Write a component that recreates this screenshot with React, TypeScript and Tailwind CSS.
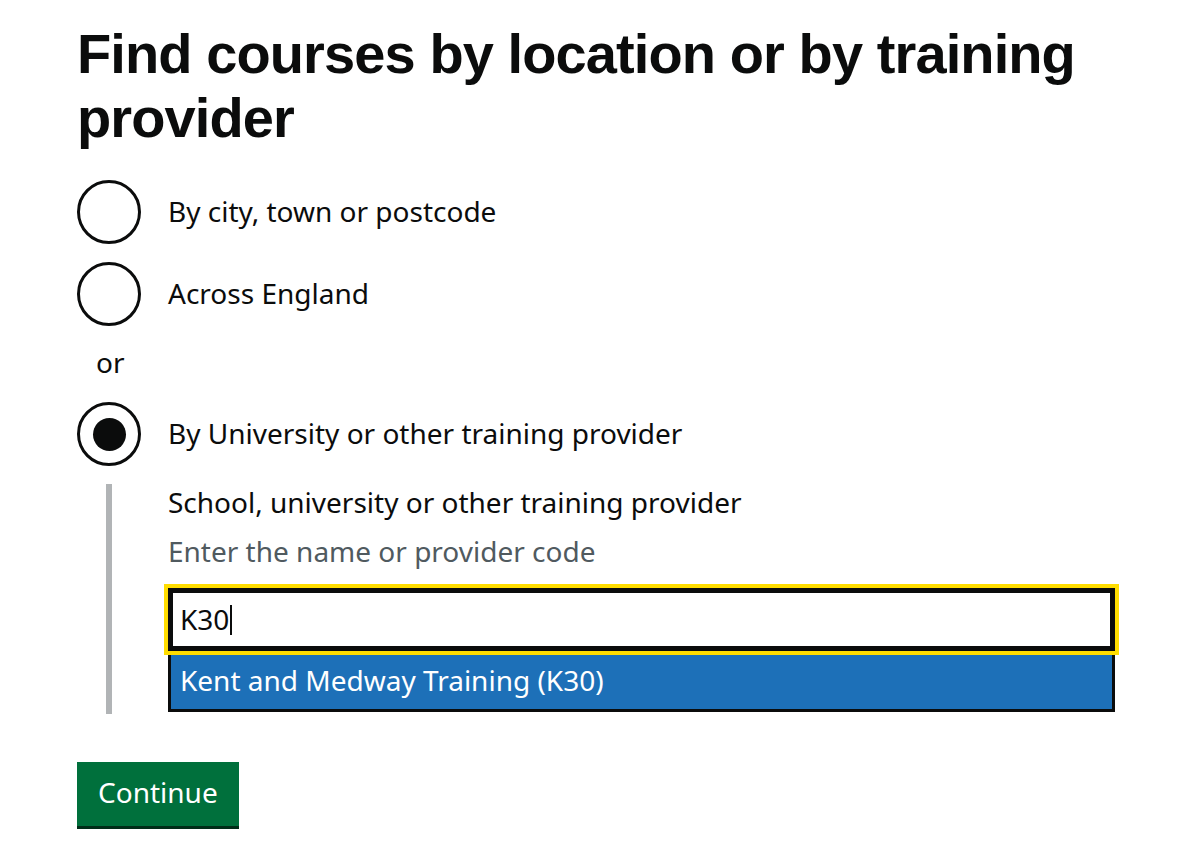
import React from 'react';

const Radio: React.FC<{ label: string; checked?: boolean }> = ({ label, checked }) => (
  <label className="flex items-center gap-[27px]">
    <span className="flex h-[64px] w-[64px] shrink-0 items-center justify-center rounded-full border-[3px] border-[#0b0c0c]">
      {checked && <span className="h-[33px] w-[33px] rounded-full bg-[#0b0c0c]" />}
    </span>
    <span className="pb-[3px] text-[28px] leading-[32px] text-[#0b0c0c]">{label}</span>
  </label>
);

export default function App() {
  return (
    <div className="min-h-screen bg-white pl-[77px] pt-[22px] font-['Noto_Sans',Arial,sans-serif] text-[#0b0c0c]">
      <h1 className="font-['Liberation_Sans',Arial,sans-serif] text-[56px] font-bold leading-[64px] tracking-[-0.9px]">
        Find courses by location or by training provider
      </h1>

      <div className="mt-[30px] flex flex-col gap-[18px]">
        <Radio label="By city, town or postcode" />
        <Radio label="Across England" />
      </div>

      <p className="mt-[20px] pl-[19px] text-[28px] leading-[32px]">or</p>

      <div className="mt-[24px]">
        <Radio label="By University or other training provider" checked />
      </div>

      {/* conditional reveal */}
      <div className="ml-[29px] mt-[18px] border-l-[6px] border-[#b1b4b6] pb-[2px] pl-[56px]">
        <p className="pt-[2px] text-[28px] leading-[32px]">School, university or other training provider</p>
        <p className="mt-[17px] text-[28px] leading-[32px] text-[#505a5f]">Enter the name or provider code</p>

        <div className="mt-[21px] w-[947px]">
          <div className="h-[63px] border-[5px] border-[#0b0c0c] bg-white pl-[7px] text-[28px] leading-[53px] text-[#0b0c0c] outline-[4px] outline-solid outline-[#ffdd00]">
            K30<span className="ml-[1px] inline-block h-[30px] w-[2px] translate-y-[5px] bg-[#0b0c0c]" />
          </div>
          <div className="h-[61px] border-[3px] border-t-0 border-[#0b0c0c] bg-[#1d70b8] pl-[9px] text-[28px] leading-[58px] text-white">
            Kent and Medway Training (K30)
          </div>
        </div>
      </div>

      <button className="mt-[48px] h-[64px] bg-[#00703c] px-[21px] pb-[4px] text-[28px] leading-[32px] text-white shadow-[0_3px_0_#002d18]">
        Continue
      </button>
    </div>
  );
}
